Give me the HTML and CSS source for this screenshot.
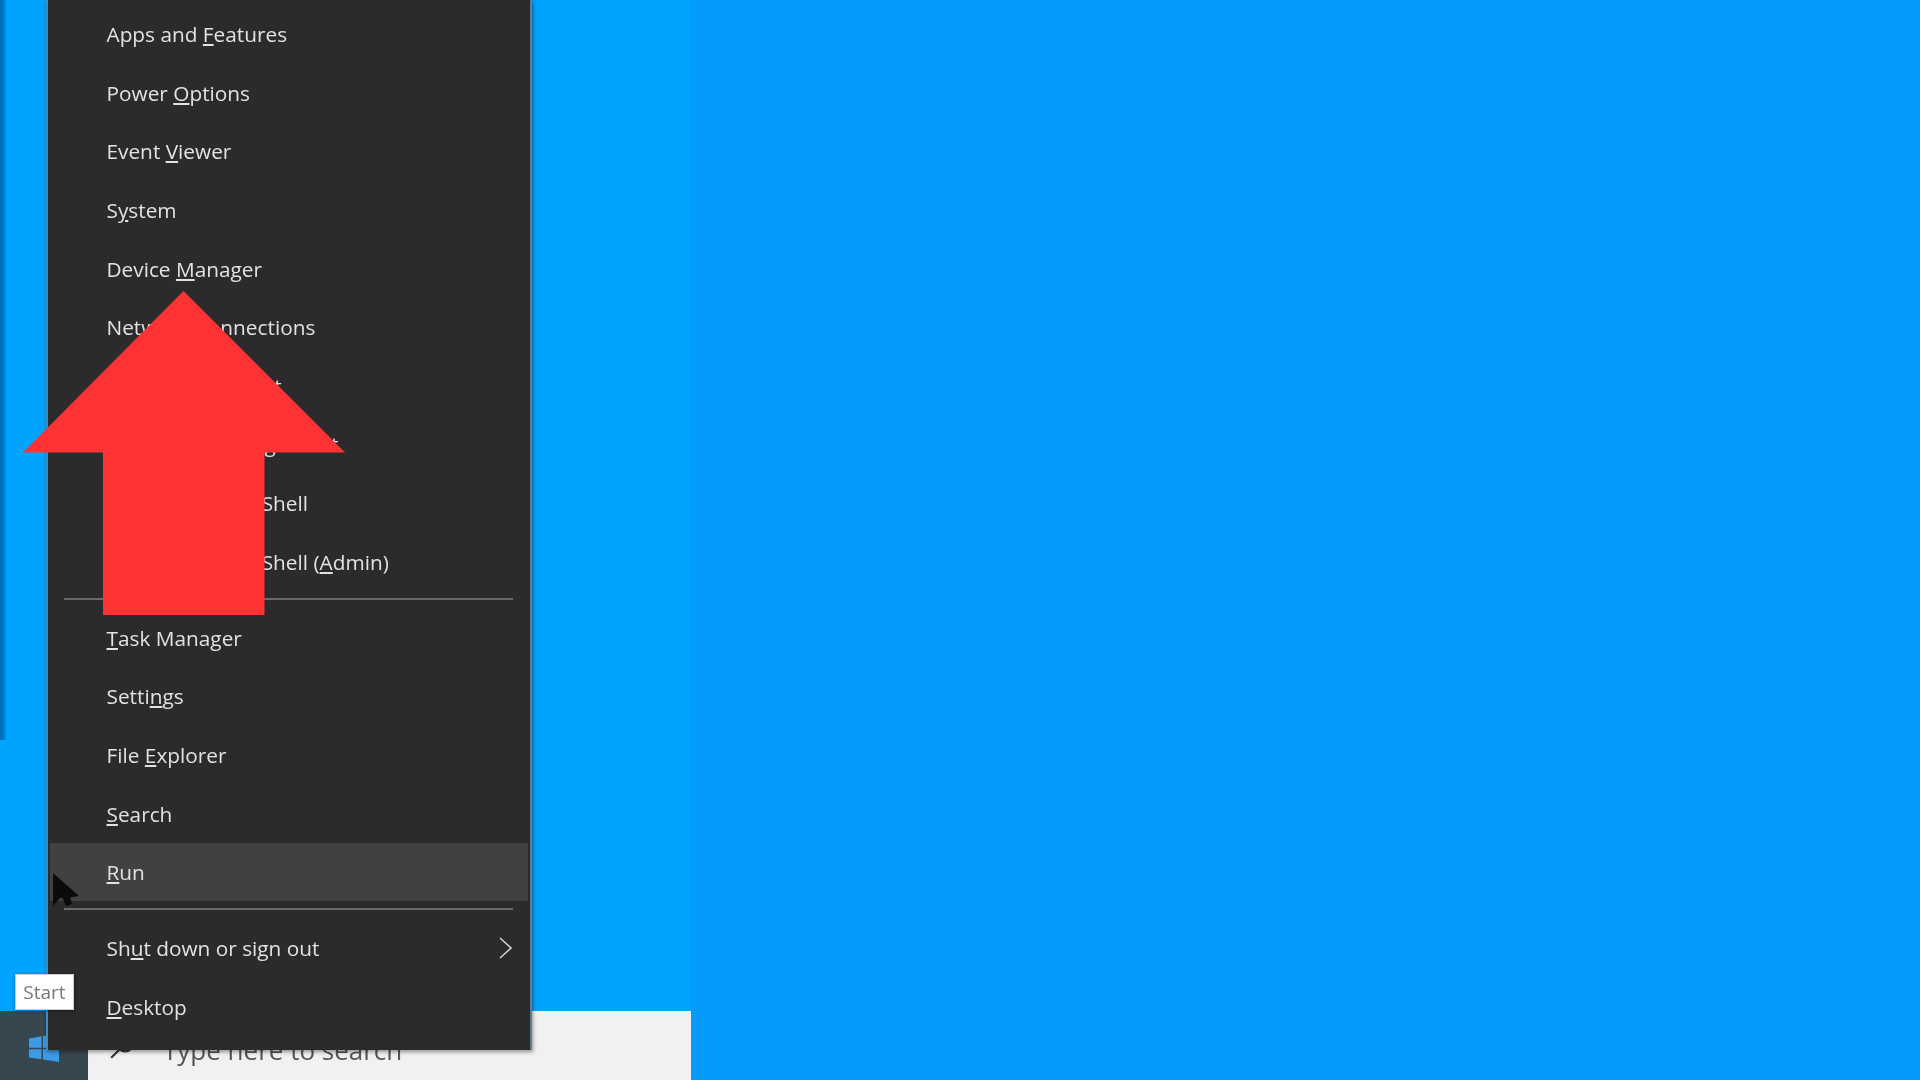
FILE: index.html
```html
<!DOCTYPE html>
<html lang="en">
<head>
<meta charset="utf-8">
<title>Start context menu</title>
<link rel="stylesheet" href="styles.css">
</head>
<body>
<div class="screen">
  <div class="capture">
    <div class="desktop"><div class="edge"></div></div>
    <div class="taskbar">
      <div class="start">
        <svg class="winlogo" viewBox="0 0 30 27" aria-hidden="true">
          <polygon points="0,3.5 12.5,1.2 12.5,12.7 0,12.7"/>
          <polygon points="14,1 30,0 30,12.7 14,12.7"/>
          <polygon points="0,14.2 12.5,14.2 12.5,24.3 0,22.6"/>
          <polygon points="14,14.2 30,14.2 30,27 14,24.5"/>
        </svg>
      </div>
      <div class="search">
        <svg class="searchicon" viewBox="0 0 24 24" aria-hidden="true">
          <circle cx="15" cy="9" r="7"/>
          <line x1="10" y1="14" x2="2" y2="22"/>
        </svg>
        <span class="searchtext">Type here to search</span>
      </div>
    </div>

    <nav class="menu">
      <div class="item"><span class="label">Apps and <u>F</u>eatures</span></div>
      <div class="item"><span class="label">Power <u>O</u>ptions</span></div>
      <div class="item"><span class="label">Event <u>V</u>iewer</span></div>
      <div class="item"><span class="label">S<u>y</u>stem</span></div>
      <div class="item"><span class="label">Device <u>M</u>anager</span></div>
      <div class="item"><span class="label">Net<u>w</u>ork Connections</span></div>
      <div class="item"><span class="label">Dis<u>k</u> Management</span></div>
      <div class="item"><span class="label">Computer Mana<u>g</u>ement</span></div>
      <div class="item"><span class="label">W<u>i</u>ndows PowerShell</span></div>
      <div class="item"><span class="label">Windows PowerShell (<u>A</u>dmin)</span></div>
      <div class="sep"></div>
      <div class="item"><span class="label"><u>T</u>ask Manager</span></div>
      <div class="item"><span class="label">Setti<u>n</u>gs</span></div>
      <div class="item"><span class="label">File <u>E</u>xplorer</span></div>
      <div class="item"><span class="label"><u>S</u>earch</span></div>
      <div class="item active"><span class="label"><u>R</u>un</span></div>
      <div class="sep"></div>
      <div class="item"><span class="label">Sh<u>u</u>t down or sign out</span>
        <svg class="chev" viewBox="0 0 16 24" aria-hidden="true"><polyline points="2,2 13,12 2,22"/></svg>
      </div>
      <div class="item"><span class="label"><u>D</u>esktop</span></div>
    </nav>

    <div class="tooltip"><span class="tiptext">Start</span></div>

    <svg class="cursor" viewBox="0 0 28 36" aria-hidden="true">
      <polygon points="1,1 1,34 8,26 15,26 27,24"/>
      <polygon points="9,22 17,22 20,32 14,34"/>
    </svg>

    <svg class="arrow" viewBox="0 0 322 324" aria-hidden="true">
      <polygon points="160.5,0 322,161.5 241.5,161.5 241.5,324 80,324 80,161.5 0,161.5"/>
    </svg>
  </div>
  <div class="blank"></div>
</div>
</body>
</html>
```

FILE: styles.css
```css
* { box-sizing: border-box; }
html, body { margin: 0; height: 100%; overflow: hidden; }
body { font-family: "Open Sans", "Liberation Sans", sans-serif; }

.screen { display: flex; width: 1920px; height: 1080px; background: #059bfc; }
.blank { flex: 1; }

.capture { position: relative; display: flex; flex-direction: column; width: 691px; height: 1080px; }
.desktop { flex: 1; background: #00a4ff; }
.edge { width: 7px; height: 740px; background: linear-gradient(90deg, #006fb6 0, #0075c0 45%, #00a4ff 100%); border-radius: 0 0 3px 0; }

.taskbar { display: flex; height: 69px; }
.start { display: flex; align-items: center; justify-content: center; width: 88px; background: #37474f; }
.winlogo { width: 30px; height: 27px; margin-top: 6px; fill: #3d9be6; filter: blur(0.6px); }
.search { flex: 1; display: flex; align-items: center; gap: 28px; padding: 8px 0 0 21px; background: #f1f1f1; box-shadow: inset 0 2px 1px #f8f8fc; }
.searchicon { width: 26px; height: 26px; margin-top: -6px; fill: none; stroke: #333; stroke-width: 2; flex: none; filter: blur(0.5px); }
.searchtext { font-size: 26px; color: #555; filter: blur(0.6px); }

.menu { position: absolute; left: 46px; top: 0; width: 486px; height: 1050px; padding: 5px 2px 0;
  background: #2b2b2b; border-right: 2px solid #5f7d92; border-left: 2px solid #3f8cc0;
  box-shadow: 1px 2px 4px rgba(0,0,0,.4); }
.item { position: relative; display: flex; align-items: center; height: 58.6px; padding-left: 56.5px; }
.label { font-size: 20.8px; color: #e2e2e2; white-space: pre; filter: blur(0.5px); }
.item.active { background: #414141; }
.sep { height: 2px; margin: 7px 15px 8.5px 14px; background: #6a6a6a; }
.chev { position: absolute; right: 14px; top: 17px; width: 16px; height: 24px; fill: none; stroke: #cfcfcf; stroke-width: 1.6; filter: blur(0.4px); }

.tooltip { position: absolute; left: 15px; top: 974px; width: 59px; height: 36px; display: flex; align-items: center; justify-content: center;
  background: #fff; border: 1px solid #ccc; box-shadow: 0 1px 3px rgba(0,0,0,.4); }
.tiptext { font-size: 19px; color: #777; filter: blur(0.6px); }

.cursor { position: absolute; left: 52px; top: 872px; width: 28px; height: 36px; fill: #0b0b0b; filter: blur(0.5px); }
.arrow { position: absolute; left: 23px; top: 291px; width: 322px; height: 324px; fill: #ff3333; }
```
